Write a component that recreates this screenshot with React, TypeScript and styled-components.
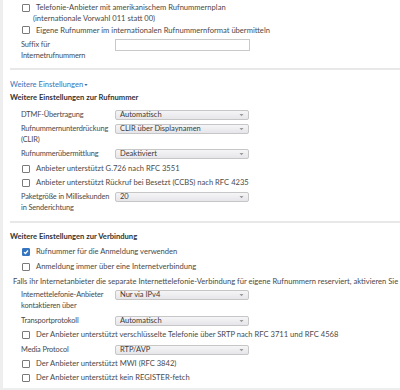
import styled, {createGlobalStyle} from 'styled-components'

const GlobalStyle = createGlobalStyle`
  html, body {
    margin: 0;
    padding: 0;
    background: #eeeeee;
  }
  body {
    font-family: 'Lato', 'Liberation Sans', sans-serif;
    font-size: 7.6px;
    color: #4a4a4a;
  }
`

const Page = styled.div`
  width: 397px;
  height: 388px;
  margin-left: 3px;
  background: #ffffff;
  overflow: hidden;
  padding-top: 2px;
  box-sizing: border-box;
  white-space: nowrap;
`

const Indent = styled.div`
  padding-left: 11px;
`

const Row = styled.div<{$mt?: number}>`
  display: flex;
  align-items: flex-start;
  margin-top: ${p => p.$mt ?? 0}px;
  line-height: 11px;
`

const CheckRow = styled(Row)`
  padding-left: 12px;
  gap: 6px;
`

const Box = styled.span<{$checked?: boolean}>`
  flex: none;
  width: 8px;
  height: 8px;
  margin-top: 1.5px;
  box-sizing: border-box;
  border: 1px solid ${p => (p.$checked ? '#3676c0' : '#7a7a7a')};
  border-radius: 1px;
  background: ${p => (p.$checked ? '#3676c0' : '#fff')};
  display: flex;
  align-items: center;
  justify-content: center;
`

const CheckText = styled.div`
  display: flex;
  flex-direction: column;
`

const Wrapped = styled.span`
  margin-left: -3px;
`

const Label = styled.div`
  width: 94px;
  flex: none;
  white-space: nowrap;
  font-size: 7.4px;
  letter-spacing: -0.12px;
`

const Select = styled.div`
  width: 134px;
  height: 10px;
  margin-top: 0.5px;
  box-sizing: border-box;
  border: 1px solid #c6c6c6;
  border-radius: 2px;
  background: linear-gradient(#f5f5f7, #e6e6ea);
  display: flex;
  align-items: center;
  justify-content: space-between;
  padding: 0 4px 0 4px;
  color: #3a3a3a;
  font-size: 7.5px;
  line-height: 8px;
`

const Input = styled.div`
  width: 135px;
  height: 12px;
  box-sizing: border-box;
  border: 1px solid #c9c9c9;
  background: #fff;
`

const Rule = styled.div<{$mt: number}>`
  margin: ${p => p.$mt}px 0 0 7px;
  height: 2px;
  background: #e8e8e8;
`

const Section = styled.div`
  padding-left: 7px;
`

const MoreLink = styled.div<{$mt: number}>`
  margin-top: ${p => p.$mt}px;
  line-height: 11px;
  color: #3b73b6;
  display: flex;
  align-items: center;
  gap: 1px;
`

const Heading = styled.div<{$mt: number}>`
  margin-top: ${p => p.$mt}px;
  line-height: 11px;
  font-weight: 700;
  color: #333;
`

const Note = styled.div<{$mt: number}>`
  margin-top: ${p => p.$mt}px;
  line-height: 11px;
  padding-left: 3px;
`

const Arrow = () => (
  <svg width="5" height="4" viewBox="0 0 5 4">
    <path d="M0.5 1 L4.5 1 L2.5 3.2 Z" fill="#9a9a9a" />
  </svg>
)

const Check = ({checked, children, mt}: {checked?: boolean; children: React.ReactNode; mt?: number}) => (
  <CheckRow $mt={mt}>
    <Box $checked={checked}>
      {checked && (
        <svg width="6" height="6" viewBox="0 0 6 6">
          <path d="M1 3.1 L2.4 4.5 L5 1.5" stroke="#fff" strokeWidth="1.2" fill="none" />
        </svg>
      )}
    </Box>
    <CheckText>{children}</CheckText>
  </CheckRow>
)

const SelectRow = ({label, value, mt}: {label: React.ReactNode; value: string; mt?: number}) => (
  <Row $mt={mt}>
    <Label>{label}</Label>
    <Select>
      <span>{value}</span>
      <Arrow />
    </Select>
  </Row>
)

export default function App() {
  return (
    <>
      <GlobalStyle />
      <Page>
        <Section>
          <Check>
            <span>Telefonie-Anbieter mit amerikanischem Rufnummernplan</span>
            <Wrapped>(internationale Vorwahl 011 statt 00)</Wrapped>
          </Check>
          <Check mt={0.5}>Eigene Rufnummer im internationalen Rufnummernformat übermitteln</Check>
          <Indent>
            <Row $mt={3.5}>
              <Label>
                Suffix für
                <br />
                Internetrufnummern
              </Label>
              <Input />
            </Row>
          </Indent>
        </Section>
        <Rule $mt={6.5} />
        <Section>
          <MoreLink $mt={9.5}>
            Weitere Einstellungen
            <svg width="4" height="4" viewBox="0 0 4 4">
              <path d="M0.3 1 L3.7 1 L2 3 Z" fill="#3b73b6" />
            </svg>
          </MoreLink>
          <Heading $mt={2}>Weitere Einstellungen zur Rufnummer</Heading>
          <Indent>
            <SelectRow mt={6} label="DTMF-Übertragung" value="Automatisch" />
            <SelectRow
              mt={3}
              label={
                <>
                  Rufnummernunterdrückung
                  <br />
                  (CLIR)
                </>
              }
              value="CLIR über Displaynamen"
            />
            <SelectRow mt={3} label="Rufnummerübermittlung" value="Deaktiviert" />
          </Indent>
          <Check mt={4}>Anbieter unterstützt G.726 nach RFC 3551</Check>
          <Check mt={3}>Anbieter unterstützt Rückruf bei Besetzt (CCBS) nach RFC 4235</Check>
          <Indent>
            <SelectRow
              mt={3}
              label={
                <>
                  Paketgröße in Millisekunden
                  <br />
                  in Senderichtung
                </>
              }
              value="20"
            />
          </Indent>
        </Section>
        <Rule $mt={7.5} />
        <Section>
          <Heading $mt={8.5}>Weitere Einstellungen zur Verbindung</Heading>
          <Check checked mt={4}>Rufnummer für die Anmeldung verwenden</Check>
          <Check mt={4}>Anmeldung immer über eine Internetverbindung</Check>
          <Note $mt={4}>
            Falls ihr Internetanbieter die separate Internettelefonie-Verbindung für eigene Rufnummern reserviert,
            aktivieren Sie diese Option.
          </Note>
          <Indent>
            <SelectRow
              mt={2}
              label={
                <>
                  Internettelefonie-Anbieter
                  <br />
                  kontaktieren über
                </>
              }
              value="Nur via IPv4"
            />
            <SelectRow mt={4} label="Transportprotokoll" value="Automatisch" />
          </Indent>
          <Check mt={3}>Der Anbieter unterstützt verschlüsselte Telefonie über SRTP nach RFC 3711 und RFC 4568</Check>
          <Indent>
            <SelectRow mt={4} label="Media Protocol" value="RTP/AVP" />
          </Indent>
          <Check mt={3}>Der Anbieter unterstützt MWI (RFC 3842)</Check>
          <Check mt={3}>Der Anbieter unterstützt kein REGISTER-fetch</Check>
        </Section>
      </Page>
    </>
  )
}
